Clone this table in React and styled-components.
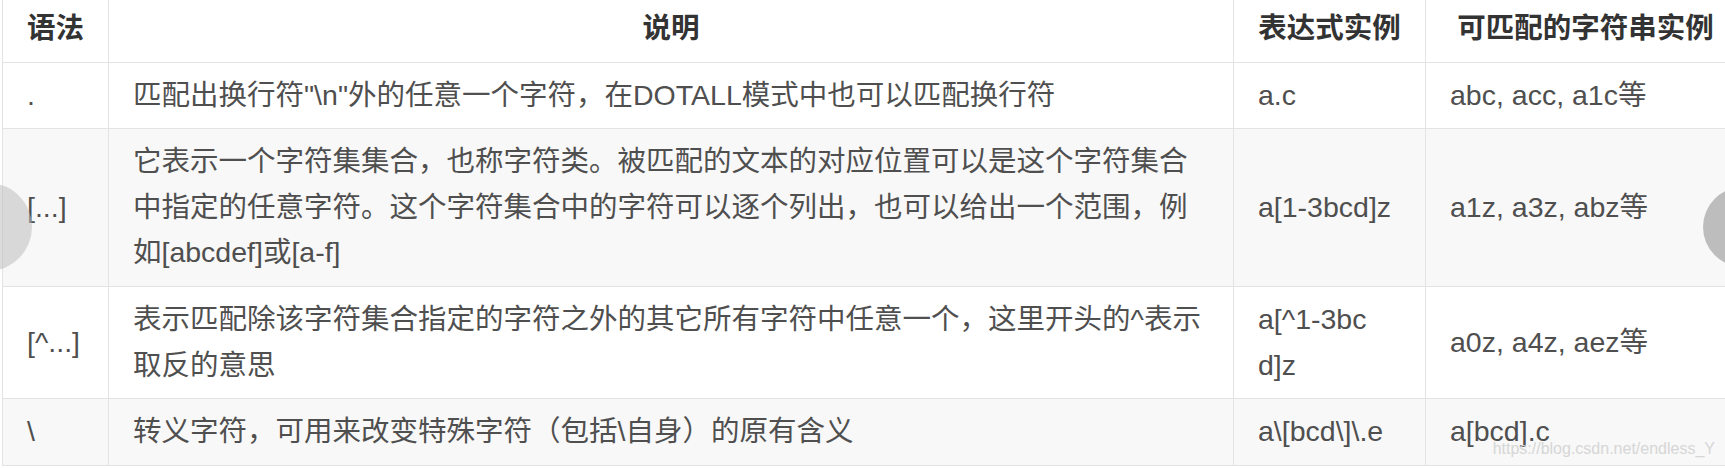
import styled, { createGlobalStyle } from "styled-components";

const GlobalStyle = createGlobalStyle`
  html, body {
    margin: 0;
    padding: 0;
    background: #ffffff;
    overflow: hidden;
  }
`;

const rows = [
  {
    syntax: ".",
    desc: '匹配出换行符"\\n"外的任意一个字符，在DOTALL模式中也可以匹配换行符',
    expr: ["a.c"],
    match: "abc, acc, a1c等",
  },
  {
    syntax: "[...]",
    desc: "它表示一个字符集集合，也称字符类。被匹配的文本的对应位置可以是这个字符集合中指定的任意字符。这个字符集合中的字符可以逐个列出，也可以给出一个范围，例如[abcdef]或[a-f]",
    expr: ["a[1-3bcd]z"],
    match: "a1z, a3z, abz等",
  },
  {
    syntax: "[^...]",
    desc: "表示匹配除该字符集合指定的字符之外的其它所有字符中任意一个，这里开头的^表示取反的意思",
    expr: ["a[^1-3bc", "d]z"],
    match: "a0z, a4z, aez等",
  },
  {
    syntax: "\\",
    desc: "转义字符，可用来改变特殊字符（包括\\自身）的原有含义",
    expr: ["a\\[bcd\\]\\.e"],
    match: "a[bcd].c",
  },
];

function App() {
  return (
    <Page>
      <GlobalStyle />
      <Table>
        <colgroup>
          <col style={{ width: 106 }} />
          <col style={{ width: 1125 }} />
          <col style={{ width: 192 }} />
          <col style={{ width: 320 }} />
        </colgroup>
        <thead>
          <tr>
            <HeadCell>语法</HeadCell>
            <HeadCell>说明</HeadCell>
            <HeadCell>表达式实例</HeadCell>
            <HeadCell>可匹配的字符串实例</HeadCell>
          </tr>
        </thead>
        <tbody>
          {rows.map((row, i) => (
            <Row key={i} $shade={i % 2 === 1}>
              <Cell>{row.syntax}</Cell>
              <Cell>{row.desc}</Cell>
              <Cell>
                {row.expr.map((part, j) => (
                  <Line key={j}>{part}</Line>
                ))}
              </Cell>
              <Cell>{row.match}</Cell>
            </Row>
          ))}
        </tbody>
      </Table>
      <NavButton $side="left" />
      <NavButton $side="right" />
      <Watermark>https://blog.csdn.net/endless_Y</Watermark>
    </Page>
  );
}

const Page = styled.div`
  position: relative;
  width: 1725px;
  height: 468px;
  overflow: hidden;
  padding-left: 2px;
  box-sizing: border-box;
  font-family: "Liberation Sans", Arial, "Noto Sans CJK SC", sans-serif;
`;

const Table = styled.table`
  table-layout: fixed;
  border-collapse: collapse;
  width: 1743px;
  font-size: 28.5px;
  line-height: 45.6px;
  color: #4f4f4f;
`;

const HeadCell = styled.th`
  padding: 6px 24px 10px;
  border: 1px solid #e3e3e3;
  border-top: none;
  font-weight: bold;
  color: #333333;
  text-align: center;
  white-space: nowrap;
  vertical-align: middle;
`;

const Row = styled.tr`
  background: ${(p) => (p.$shade ? "#f8f8f8" : "#ffffff")};
`;

const Cell = styled.td`
  padding: 10px 24px;
  border: 1px solid #e3e3e3;
  vertical-align: middle;
  text-align: left;
`;

const Line = styled.div`
  white-space: nowrap;
`;

const NavButton = styled.div`
  position: absolute;
  border-radius: 50%;
  ${(p) =>
    p.$side === "left"
      ? `
    left: -56px;
    top: 183px;
    width: 88px;
    height: 88px;
    background: rgba(190, 190, 190, 0.55);
  `
      : `
    right: -58px;
    top: 187px;
    width: 80px;
    height: 80px;
    background: #bdbdbd;
  `}
`;

const Watermark = styled.div`
  position: absolute;
  right: 10px;
  top: 440px;
  font-family: "Liberation Sans", Arial, sans-serif;
  font-size: 16px;
  line-height: 18px;
  color: #d6d6d6;
  white-space: nowrap;
`;

export default App;
